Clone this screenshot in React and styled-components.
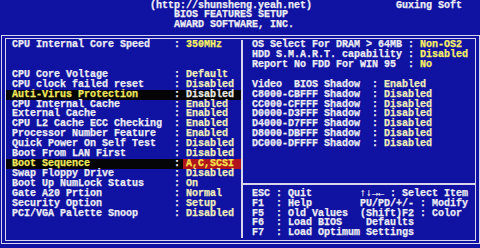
import styled, { createGlobalStyle } from "styled-components";

const CELL = 6;
const ROW = 9.92;
const BLUE = "#1012a2";
const LINE = "#d6d6ec";
const WHITE = "#ececf4";

const GlobalStyle = createGlobalStyle`
  html, body {
    margin: 0;
    padding: 0;
    background: ${BLUE};
  }
`;

const Screen = styled.div`
  width: 480px;
  height: 248px;
  overflow: hidden;
  display: flex;
  flex-direction: column;
  background: ${BLUE};
  color: ${WHITE};
  font-family: "Liberation Mono", "DejaVu Sans Mono", monospace;
  font-weight: bold;
  font-size: 10px;
  line-height: ${ROW}px;
  white-space: pre;
  -webkit-text-stroke: 0.25px currentColor;
`;

const Header = styled.header`
  display: flex;
  flex-direction: column;
  padding-top: 0.5px;
`;
const HeaderLine = styled.div`
  display: flex;
  height: ${ROW}px;
`;
const HeaderText = styled.span`
  margin-left: ${({ $col = 0 }) => $col * CELL}px;
  ${({ $span }) => ($span ? `width: ${$span * CELL}px;` : "")}
`;

const Frame = styled.div`
  margin: 4.74px 0 0 1px;
  border: 1px solid ${LINE};
  padding: 2px 3px;
`;
const InnerFrame = styled.div`
  display: flex;
  border: 1px solid ${LINE};
  padding: 1.18px 0 1.42px;
`;

const LeftPanel = styled.div`
  width: 235px;
  display: flex;
  flex-direction: column;
`;
const RightPanel = styled.div`
  flex: 1;
  display: flex;
  flex-direction: column;
  border-left: 2px solid ${LINE};
`;
const Section = styled.div`
  display: flex;
  flex-direction: column;
  padding-left: ${({ $pad }) => $pad}px;
`;

const Row = styled.div`
  display: flex;
  height: ${ROW}px;
  padding-left: ${({ $pad = 0 }) => $pad}px;
  background: ${({ $active }) => ($active ? "#050508" : "transparent")};
`;
const Blank = styled.div`
  height: ${({ $rows = 1 }) => $rows * ROW}px;
`;
const Label = styled.span`
  width: ${({ $cols }) => $cols * CELL}px;
  color: ${({ $active }) => ($active ? "#f2e85a" : WHITE)};
`;
const Colon = styled.span`
  width: ${2 * CELL}px;
  color: ${WHITE};
`;

const valueColor = {
  normal: "#f0edba",
  bright: "#f8f064",
  active: "#efeee4",
};

const Value = styled.span`
  color: ${({ $tone }) => valueColor[$tone] || valueColor.normal};
  ${({ $selected }) =>
    $selected &&
    `
    flex: 1;
    margin-left: -3px;
    padding-left: 3px;
    background: #b0141c;
    color: #f8e64e;
  `}
`;

const Rule = styled.div`
  height: 2px;
  margin: ${(ROW - 2) / 2}px 0;
  background: ${LINE};
`;

const Key = styled.span`
  width: ${4 * CELL}px;
`;
const Action = styled.span`
  ${({ $wide }) => (!$wide ? `width: ${12 * CELL}px;` : "")}
`;

const Setting = ({ label, value, cols, tone, active, selected, pad }) => (
  <Row $active={active} $pad={pad}>
    <Label $cols={cols} $active={active}>
      {label}
    </Label>
    <Colon>: </Colon>
    <Value $tone={active && !selected ? "active" : tone} $selected={selected}>
      {value}
    </Value>
  </Row>
);

const features = [
  ["CPU Core Voltage", "Default"],
  ["CPU clock failed reset", "Disabled"],
  ["Auti-Virus Protection", "Disabled", { active: true }],
  ["CPU Internal Cache", "Enabled"],
  ["External Cache", "Enabled"],
  ["CPU L2 Cache ECC Checking", "Enabled"],
  ["Processor Number Feature", "Enabled"],
  ["Quick Power On Self Test", "Disabled"],
  ["Boot From LAN First", "Disabled"],
  ["Boot Sequence", "A,C,SCSI", { active: true, selected: true }],
  ["Swap Floppy Drive", "Disabled"],
  ["Boot Up NumLock Status", "On"],
  ["Gate A20 Prtion", "Normal"],
  ["Security Option", "Setup"],
  ["PCI/VGA Palette Snoop", "Disabled"],
];

const options = [
  ["OS Select For DRAM > 64MB", "Non-OS2"],
  ["HDD S.M.A.R.T. capability", "Disabled"],
  ["Report No FDD For WIN 95", "No"],
];

const shadows = [
  ["Video  BIOS Shadow", "Enabled"],
  ["C8000-CBFFF Shadow", "Disabled"],
  ["CC000-CFFFF Shadow", "Disabled"],
  ["D0000-D3FFF Shadow", "Disabled"],
  ["D4000-D7FFF Shadow", "Disabled"],
  ["D8000-DBFFF Shadow", "Disabled"],
  ["DC000-DFFFF Shadow", "Disabled"],
];

const help = [
  ["ESC", "Quit", "\u2191\u2193\u2192\u2190 : Select Item"],
  ["F1", "Help", "PU/PD/+/- : Modify"],
  ["F5", "Old Values", "(Shift)F2 : Color"],
  ["F6", "Load BIOS    Defaults"],
  ["F7", "Load Optimum Settings"],
];

const App = () => {
  return (
    <Screen>
      <GlobalStyle />
      <Header>
        <HeaderLine>
          <HeaderText $col={25} $span={41}>
            (http://shunsheng.yeah.net)
          </HeaderText>
          <HeaderText>Guxing Soft</HeaderText>
        </HeaderLine>
        <HeaderLine>
          <HeaderText $col={29}>BIOS FEATURES SETUP</HeaderText>
        </HeaderLine>
        <HeaderLine>
          <HeaderText $col={29}>AWARD SOFTWARE, INC.</HeaderText>
        </HeaderLine>
      </Header>

      <Frame>
        <InnerFrame>
          <LeftPanel>
            <Setting
              pad={6}
              cols={27}
              label="CPU Internal Core Speed"
              value="350MHz"
              tone="bright"
            />
            <Blank $rows={2} />
            {features.map(([label, value, flags = {}]) => (
              <Setting
                key={label}
                pad={6}
                cols={27}
                label={label}
                value={value}
                {...flags}
              />
            ))}
            <Blank $rows={2} />
          </LeftPanel>

          <RightPanel>
            <Section $pad={9}>
              {options.map(([label, value]) => (
                <Setting
                  key={label}
                  cols={26}
                  label={label}
                  value={value}
                  tone="bright"
                />
              ))}
              <Blank />
              {shadows.map(([label, value]) => (
                <Setting key={label} cols={20} label={label} value={value} />
              ))}
            </Section>
            <Blank $rows={3} />
            <Rule />
            <Section $pad={9}>
              {help.map(([key, action, hint]) => (
                <Row key={key}>
                  <Key>{key}</Key>
                  <Colon>: </Colon>
                  <Action $wide={!hint}>{action}</Action>
                  {hint && <span>{hint}</span>}
                </Row>
              ))}
            </Section>
          </RightPanel>
        </InnerFrame>
      </Frame>
    </Screen>
  );
};

export default App;
